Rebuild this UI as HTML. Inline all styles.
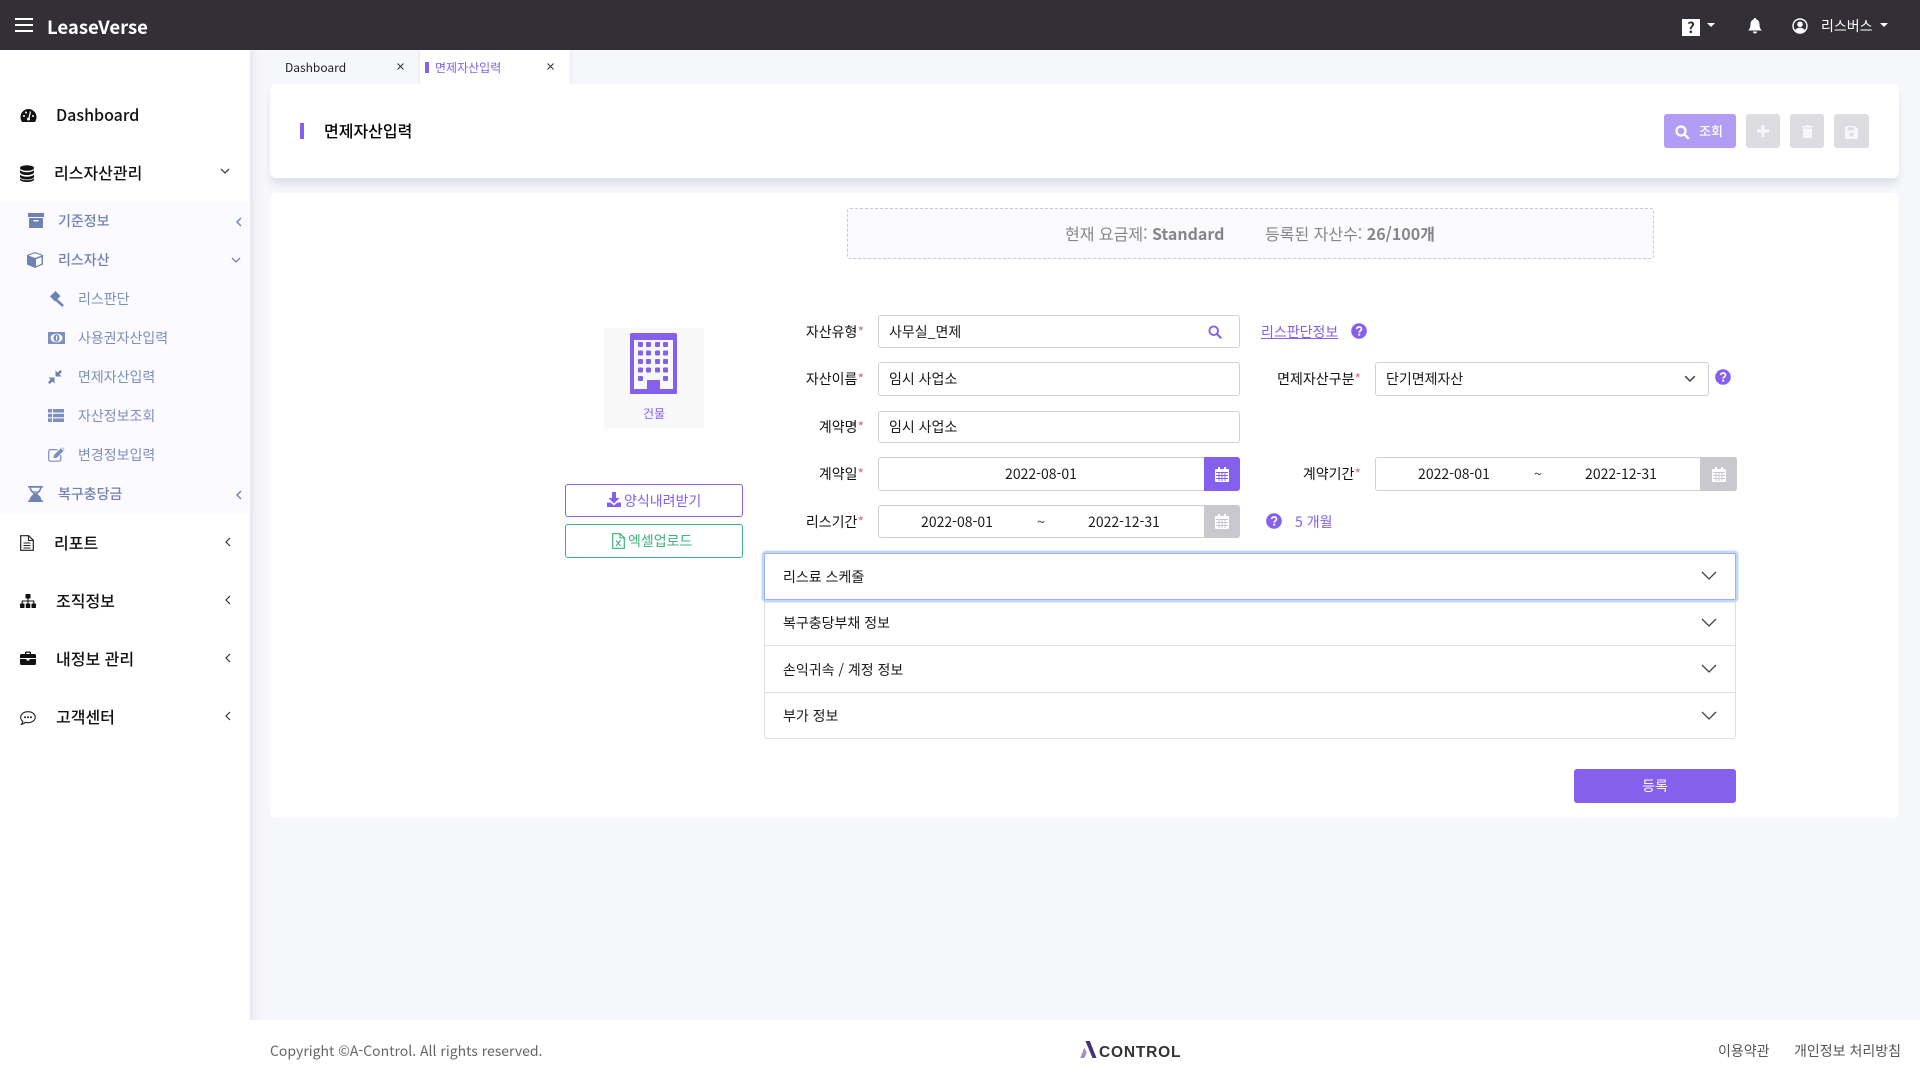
<!DOCTYPE html>
<html lang="ko">
<head>
<meta charset="utf-8">
<title>LeaseVerse</title>
<style>
*{box-sizing:border-box}
html,body{margin:0;padding:0}
body{width:1920px;height:1080px;position:relative;overflow:hidden;background:#f6f7fb;font-family:"Noto Sans CJK KR","Liberation Sans",sans-serif;font-size:14px;color:#1a1a1a}
.a{position:absolute}
.t{position:absolute;line-height:20px;white-space:nowrap}
svg{position:absolute;display:block}
.side{font-size:16px;color:#111;font-weight:500}
.sub{font-size:14px;color:#6f82b3;font-weight:500}
.sub2{font-size:14px;color:#7d8fbc}
.inp{position:absolute;background:#fff;border:1px solid #ced1dc;border-radius:3px}
.lab{position:absolute;line-height:20px;text-align:right;white-space:nowrap;color:#111}
.lab i{font-style:normal;color:#d0708a}
.sq{position:absolute;border-radius:0 3px 3px 0}
.acc{position:absolute;left:764px;width:972px;background:#fff}
.btn{position:absolute;border-radius:3px}
</style>
</head>
<body>
<!-- top bar -->
<div class="a" style="left:0;top:0;width:1920px;height:50px;background:#322f36"></div>
<div class="a" style="left:15px;top:18px;width:18px;height:2px;background:#fff"></div>
<div class="a" style="left:15px;top:24px;width:18px;height:2px;background:#fff"></div>
<div class="a" style="left:15px;top:30px;width:18px;height:2px;background:#fff"></div>
<div class="t" style="left:47px;top:17px;font-size:18.5px;font-weight:700;color:#fff">LeaseVerse</div>
<div class="a" style="left:1682px;top:19px;width:18px;height:17px;background:#fff;color:#322f36;font-size:15px;font-weight:700;text-align:center;line-height:17px">?</div>
<div class="a" style="left:1707px;top:23px;border:4px solid transparent;border-top:4px solid #fff"></div>
<svg style="left:1747px;top:18px" width="16" height="16" viewBox="0 0 16 16"><path d="M8 0a1.3 1.3 0 0 1 1.2 1.4C11.5 2 12.5 4 12.5 6.5c0 3 1 4.5 2.3 6H1.200c1.300-1.500 2.300-3 2.300-6C3.500 4 4.500 2 6.800 1.400A1.300 1.300 0 0 1 8 0zM6 13.500h4a2 2 0 0 1-4 0z" fill="#fff"/></svg>
<svg style="left:1792px;top:18px" width="16" height="16" viewBox="0 0 16 16"><circle cx="8" cy="8" r="7" fill="none" stroke="#fff" stroke-width="1.400"/><circle cx="8" cy="6.300" r="2.800" fill="#fff"/><path d="M3 12.500c1-2 3-2.700 5-2.700s4 .7 5 2.700a7 7 0 0 1-10 0z" fill="#fff"/></svg>
<div class="t" style="left:1821px;top:16px;color:#fff;font-size:14px">리스버스</div>
<div class="a" style="left:1880px;top:23px;border:4px solid transparent;border-top:4px solid #fff"></div>

<!-- sidebar -->
<div class="a" style="left:0;top:50px;width:250px;height:1030px;background:#fff;box-shadow:3px 0 8px rgba(60,60,110,.11)"></div>
<div class="a" style="left:0;top:201px;width:250px;height:312px;background:#fafaff"></div>

<svg style="left:20px;top:108px" width="17" height="15" viewBox="0 0 17 15"><path d="M8.500 1A8 8 0 0 0 .5 9c0 2 .6 3.500 1.500 5h13c.9-1.500 1.500-3 1.500-5a8 8 0 0 0-8-8z" fill="#111"/><circle cx="4" cy="8" r="1" fill="#fff"/><circle cx="6" cy="4.500" r="1" fill="#fff"/><circle cx="13" cy="8" r="1" fill="#fff"/><path d="M10.500 3.500L9 10" stroke="#fff" stroke-width="1.200"/><circle cx="8.500" cy="11" r="1.500" fill="#fff"/></svg>
<div class="t side" style="left:56px;top:104px">Dashboard</div>

<svg style="left:20px;top:165px" width="14" height="17" viewBox="0 0 14 17"><ellipse cx="7" cy="3" rx="7" ry="2.800" fill="#111"/><path d="M0 5v2.200c0 1.500 3 2.800 7 2.800s7-1.300 7-2.800V5c-1 1.500-4 2.200-7 2.200S1 6.500 0 5z" fill="#111"/><path d="M0 9.500v2.200c0 1.500 3 2.800 7 2.800s7-1.300 7-2.800V9.500c-1 1.500-4 2.200-7 2.200S1 11 0 9.500z" fill="#111"/><path d="M0 13.200v1.300c0 1.400 3 2.500 7 2.500s7-1.100 7-2.500v-1.300c-1 1.300-4 2-7 2s-6-.7-7-2z" fill="#111"/></svg>
<div class="t side" style="left:54px;top:162px">리스자산관리</div>
<svg style="left:220px;top:168px" width="10" height="7" viewBox="0 0 10 7"><path d="M1 1l4 4 4-4" fill="none" stroke="#444" stroke-width="1.300"/></svg>

<svg style="left:28px;top:213px" width="16" height="15" viewBox="0 0 16 15"><rect x="0" y="0" width="16" height="4" fill="#6f82b3"/><rect x="1" y="5" width="14" height="10" fill="#6f82b3"/><rect x="5.500" y="7" width="5" height="1.400" fill="#fafaff"/></svg>
<div class="t sub" style="left:58px;top:211px">기준정보</div>
<svg style="left:235px;top:217px" width="7" height="10" viewBox="0 0 7 10"><path d="M6 1L2 5l4 4" fill="none" stroke="#6f82b3" stroke-width="1.400"/></svg>

<svg style="left:27px;top:252px" width="16" height="16" viewBox="0 0 16 16"><path d="M8 0l8 3v9.500L8 16 0 12.500V3z" fill="#6f82b3"/><path d="M1.500 3.500L8 6l6.500-2.500L8 1.200z" fill="#fafaff"/><path d="M9 7.200v7l5.500-2.500V5z" fill="#fafaff"/></svg>
<div class="t sub" style="left:58px;top:250px">리스자산</div>
<svg style="left:231px;top:257px" width="10" height="7" viewBox="0 0 10 7"><path d="M1 1l4 4 4-4" fill="none" stroke="#6f82b3" stroke-width="1.300"/></svg>

<svg style="left:48px;top:291px" width="16" height="16" viewBox="0 0 16 16"><path d="M7.500 0l5 5-5.500 5.500-5-5z" fill="#6f82b3"/><path d="M8 8.500l6.300 5.800" stroke="#6f82b3" stroke-width="2.600" stroke-linecap="round"/></svg>
<div class="t sub2" style="left:78px;top:289px">리스판단</div>

<svg style="left:48px;top:332px" width="17" height="12" viewBox="0 0 17 12"><rect width="17" height="12" rx=".8" fill="#7d8fbc"/><ellipse cx="8.500" cy="6" rx="6" ry="4.400" fill="#fafaff"/><ellipse cx="8.500" cy="6" rx="3" ry="3.800" fill="#7d8fbc"/><rect x="8" y="3.800" width="1.200" height="4.400" fill="#fafaff"/></svg>
<div class="t sub2" style="left:78px;top:328px">사용권자산입력</div>

<svg style="left:48px;top:370px" width="14" height="14" viewBox="0 0 14 14"><path d="M6.500 7.500v6l-2-2L1.500 14 0 12.500 2.500 9.500l-2-2zM7.500 6.500V.5l2 2L12.500 0 14 1.500l-2.500 3 2 2z" fill="#6f82b3"/></svg>
<div class="t sub2" style="left:78px;top:367px">면제자산입력</div>

<svg style="left:48px;top:409px" width="16" height="13" viewBox="0 0 16 13"><path d="M0 0h4v3.500H0zM5 0h11v3.500H5zM0 4.700h4v3.500H0zM5 4.700h11v3.500H5zM0 9.400h4V13H0zM5 9.400h11V13H5z" fill="#7d8fbc"/></svg>
<div class="t sub2" style="left:78px;top:406px">자산정보조회</div>

<svg style="left:48px;top:447px" width="17" height="15" viewBox="0 0 17 15"><path d="M9.500 2.600H2.500A1.800 1.800 0 0 0 .7 4.400v8A1.800 1.800 0 0 0 2.500 14.200h8.500a1.800 1.800 0 0 0 1.800-1.800V8" fill="none" stroke="#7d8fbc" stroke-width="1.200"/><path d="M6 8L12.800 1.200l2.800 2.800L8.800 10.800l-3.300.5zM13.600.5l.5-.3 2.500 2.500-.4.600z" fill="#7d8fbc"/></svg>
<div class="t sub2" style="left:78px;top:445px">변경정보입력</div>

<svg style="left:28px;top:486px" width="15" height="16" viewBox="0 0 15 16"><path d="M0 0h15v1.500h-1.500c0 3-2.500 5-4 6.500 1.500 1.500 4 3.500 4 6.500H15V16H0v-1.500h1.500c0-3 2.500-5 4-6.500-1.500-1.500-4-3.500-4-6.500H0z" fill="#6f82b3"/><path d="M3 1.800h9c-.3 2.300-3 4.500-4.500 5.700C6 6.300 3.300 4.100 3 1.800z" fill="#fafaff"/><path d="M5 5h5c-.6.900-1.800 1.800-2.500 2.500C6.800 6.800 5.600 5.900 5 5z" fill="#9dacd0"/></svg>
<div class="t sub" style="left:58px;top:484px">복구충당금</div>
<svg style="left:235px;top:490px" width="7" height="10" viewBox="0 0 7 10"><path d="M6 1L2 5l4 4" fill="none" stroke="#6f82b3" stroke-width="1.400"/></svg>

<svg style="left:20px;top:535px" width="14" height="16" viewBox="0 0 14 16"><path d="M.7.700h8l4.600 4.600v10H.7z" fill="none" stroke="#222" stroke-width="1.200"/><path d="M8.500 1v4.500H13M3.500 8h7M3.500 10.500h7M3.500 13h7" fill="none" stroke="#222" stroke-width="1.100"/></svg>
<div class="t side" style="left:54px;top:532px">리포트</div>
<svg style="left:224px;top:537px" width="7" height="10" viewBox="0 0 7 10"><path d="M6 1L2 5l4 4" fill="none" stroke="#333" stroke-width="1.200"/></svg>

<svg style="left:20px;top:594px" width="16" height="14" viewBox="0 0 16 14"><rect x="5.500" y="0" width="5" height="4.500" rx=".5" fill="#111"/><rect x="0" y="9.500" width="4.500" height="4.500" rx=".5" fill="#111"/><rect x="5.800" y="9.500" width="4.500" height="4.500" rx=".5" fill="#111"/><rect x="11.500" y="9.500" width="4.500" height="4.500" rx=".5" fill="#111"/><path d="M8 4v5.500M2.200 9.500V7h11.600v2.500" fill="none" stroke="#111" stroke-width="1.100"/></svg>
<div class="t side" style="left:56px;top:590px">조직정보</div>
<svg style="left:224px;top:595px" width="7" height="10" viewBox="0 0 7 10"><path d="M6 1L2 5l4 4" fill="none" stroke="#333" stroke-width="1.200"/></svg>

<svg style="left:20px;top:651px" width="16" height="14" viewBox="0 0 16 14"><path d="M5 3V1.500A1 1 0 0 1 6 .5h4a1 1 0 0 1 1 1V3h3.500A1.500 1.500 0 0 1 16 4.500V7H0V4.500A1.500 1.500 0 0 1 1.500 3zm1.300 0h3.400V1.800H6.300z" fill="#111"/><path d="M0 8h6.500v1.500h3V8H16v4.500a1.500 1.500 0 0 1-1.500 1.500h-13A1.500 1.500 0 0 1 0 12.500z" fill="#111"/></svg>
<div class="t side" style="left:56px;top:648px">내정보 관리</div>
<svg style="left:224px;top:653px" width="7" height="10" viewBox="0 0 7 10"><path d="M6 1L2 5l4 4" fill="none" stroke="#333" stroke-width="1.200"/></svg>

<svg style="left:20px;top:711px" width="16" height="14" viewBox="0 0 16 14"><path d="M8 .7c4.100 0 7.300 2.500 7.300 5.500S12.100 11.700 8 11.700c-.9 0-1.800-.1-2.500-.4-1 1-2.400 1.800-4 2 .8-.8 1.200-1.800 1.400-2.900C1.500 9.400.7 7.900.7 6.200.7 3.200 3.900.7 8 .7z" fill="none" stroke="#222" stroke-width="1.100"/><circle cx="5" cy="6.200" r="1" fill="#222"/><circle cx="8" cy="6.200" r="1" fill="#222"/><circle cx="11" cy="6.200" r="1" fill="#222"/></svg>
<div class="t side" style="left:56px;top:706px">고객센터</div>
<svg style="left:224px;top:711px" width="7" height="10" viewBox="0 0 7 10"><path d="M6 1L2 5l4 4" fill="none" stroke="#333" stroke-width="1.200"/></svg>

<!-- tabs -->
<div class="t" style="left:285px;top:58px;font-size:12px;color:#222">Dashboard</div>
<svg style="left:397px;top:63px" width="7" height="7" viewBox="0 0 7 7"><path d="M.5.500l6 6M6.500.500l-6 6" stroke="#333" stroke-width="1"/></svg>
<div class="a" style="left:420px;top:50px;width:150px;height:34px;background:#fff;box-shadow:0 0 3px rgba(80,80,120,.15)"></div>
<div class="a" style="left:425px;top:62px;width:4px;height:11px;background:#8560ec"></div>
<div class="t" style="left:435px;top:58px;font-size:12px;color:#8560ec">면제자산입력</div>
<svg style="left:547px;top:63px" width="7" height="7" viewBox="0 0 7 7"><path d="M.5.500l6 6M6.500.500l-6 6" stroke="#333" stroke-width="1"/></svg>

<!-- header card -->
<div class="a" style="left:270px;top:84px;width:1629px;height:94px;background:#fff;border-radius:6px;box-shadow:0 7px 8px -1px rgba(60,60,100,.12)"></div>
<div class="a" style="left:300px;top:123px;width:4px;height:16px;background:#8560ec"></div>
<div class="t" style="left:324px;top:120px;font-size:16px;font-weight:500;color:#000">면제자산입력</div>
<div class="btn" style="left:1664px;top:114px;width:72px;height:34px;background:#b39cf3"></div>
<svg style="left:1675px;top:125px" width="15" height="15" viewBox="0 0 15 15"><circle cx="6" cy="6" r="4.500" fill="none" stroke="#fff" stroke-width="2.200"/><path d="M9.500 9.500l4.300 4.300" stroke="#fff" stroke-width="2.400"/></svg>
<div class="t" style="left:1699px;top:121px;font-size:13px;font-weight:500;color:#fff">조회</div>
<div class="btn" style="left:1746px;top:114px;width:34px;height:34px;background:#dddce1"></div>
<svg style="left:1757px;top:125px" width="12" height="12" viewBox="0 0 12 12"><path d="M4.500 0h3v4.500H12v3H7.500V12h-3V7.500H0v-3h4.500z" fill="#f7f7f8"/></svg>
<div class="btn" style="left:1790px;top:114px;width:34px;height:34px;background:#dddce1"></div>
<svg style="left:1802px;top:125px" width="11" height="13" viewBox="0 0 11 13"><path d="M3.500 1L4.200 0h2.600l.7 1H11v1.500H0V1zM1 3.500h9V12a1 1 0 0 1-1 1H2a1 1 0 0 1-1-1z" fill="#f7f7f8"/></svg>
<div class="btn" style="left:1834px;top:114px;width:35px;height:34px;background:#dddce1"></div>
<svg style="left:1845px;top:126px" width="13" height="13" viewBox="0 0 13 13"><path d="M1.500 0H10l3 3v8.500a1.500 1.500 0 0 1-1.500 1.500h-10A1.500 1.500 0 0 1 0 11.500v-10A1.500 1.500 0 0 1 1.500 0z" fill="#f7f7f8"/><rect x="2.500" y="1.300" width="6.500" height="3" fill="#dddce1"/><circle cx="6.500" cy="8.500" r="2" fill="#dddce1"/></svg>

<!-- main card -->
<div class="a" style="left:270px;top:193px;width:1629px;height:625px;background:#fff;border-radius:6px"></div>
<div class="a" style="left:847px;top:208px;width:807px;height:51px;background:#fbfbff;border:1px dashed #c9c9d2;border-radius:3px"></div>
<div class="t" style="left:1065px;top:223px;font-size:16px;color:#85858c">현재 요금제: <b style="font-weight:700">Standard</b></div>
<div class="t" style="left:1265px;top:223px;font-size:16px;color:#85858c">등록된 자산수: <b style="font-weight:700">26/100개</b></div>

<!-- tile -->
<div class="a" style="left:604px;top:328px;width:100px;height:100px;background:#f8f8f8"></div>
<svg style="left:630px;top:333px" width="47" height="61" viewBox="0 0 47 61">
<rect x="0" y="0" width="47" height="61" rx="2" fill="#8560ec"/>
<rect x="4" y="7" width="39" height="50" fill="#f8f8f8"/>
<g fill="#8560ec"><rect x="8" y="9" width="5" height="5" rx="1"/><rect x="16" y="9" width="5" height="5" rx="1"/><rect x="25" y="9" width="5" height="5" rx="1"/><rect x="33" y="9" width="5" height="5" rx="1"/><rect x="8" y="17.500" width="5" height="5" rx="1"/><rect x="16" y="17.500" width="5" height="5" rx="1"/><rect x="25" y="17.500" width="5" height="5" rx="1"/><rect x="33" y="17.500" width="5" height="5" rx="1"/><rect x="8" y="26" width="5" height="5" rx="1"/><rect x="16" y="26" width="5" height="5" rx="1"/><rect x="25" y="26" width="5" height="5" rx="1"/><rect x="33" y="26" width="5" height="5" rx="1"/><rect x="8" y="34.500" width="5" height="5" rx="1"/><rect x="16" y="34.500" width="5" height="5" rx="1"/><rect x="25" y="34.500" width="5" height="5" rx="1"/><rect x="33" y="34.500" width="5" height="5" rx="1"/><rect x="8" y="43" width="5" height="5" rx="1"/><rect x="33" y="43" width="5" height="5" rx="1"/><rect x="17" y="47" width="13" height="14"/><rect x="0" y="56" width="47" height="5" rx="1"/></g></svg>
<div class="t" style="left:604px;top:404px;width:100px;text-align:center;font-size:12px;color:#8560ec">건물</div>

<!-- side buttons -->
<div class="btn" style="left:565px;top:484px;width:178px;height:33px;border:1px solid #8560ec;background:#fff"></div>
<svg style="left:607px;top:492px" width="14" height="15" viewBox="0 0 14 15"><path d="M5 0h4v6h3.500L7 11.500 1.500 6H5z" fill="#8560ec"/><path d="M0 10.500h3.500L7 13.500l3.500-3H14V15H0z" fill="#8560ec"/></svg>
<div class="t" style="left:624px;top:491px;font-size:14px;color:#8560ec">양식내려받기</div>
<div class="btn" style="left:565px;top:524px;width:178px;height:34px;border:1px solid #3fb27f;background:#fff"></div>
<svg style="left:612px;top:533px" width="13" height="16" viewBox="0 0 13 16"><path d="M.7.700h7.500l4.100 4.100v10.500H.7z" fill="none" stroke="#3fb27f" stroke-width="1.200"/><path d="M8 1v4h4" fill="none" stroke="#3fb27f" stroke-width="1.100"/><path d="M4 7.500l4.500 5.500M8.500 7.500L4 13" stroke="#3fb27f" stroke-width="1.100"/></svg>
<div class="t" style="left:628px;top:531px;font-size:14px;color:#3fb27f">엑셀업로드</div>

<!-- row 1 -->
<div class="lab" style="left:760px;width:104px;top:322px">자산유형<i>*</i></div>
<div class="inp" style="left:878px;top:315px;width:362px;height:33px"></div>
<div class="t" style="left:889px;top:322px">사무실_면제</div>
<svg style="left:1208px;top:325px" width="14" height="14" viewBox="0 0 14 14"><circle cx="5.700" cy="5.700" r="4.300" fill="none" stroke="#8560ec" stroke-width="1.900"/><path d="M9 9l4.200 4.200" stroke="#8560ec" stroke-width="2.100"/></svg>
<div class="t" style="left:1261px;top:322px;color:#8560ec;text-decoration:underline">리스판단정보</div>
<svg style="left:1351px;top:323px" width="16" height="16" viewBox="0 0 16 16"><circle cx="8" cy="8" r="7.800" fill="#8560ec"/><path d="M5.600 6.200C5.700 4.800 6.800 4 8.100 4c1.400 0 2.400.8 2.400 2 0 1.900-2.300 1.800-2.300 3.600" fill="none" stroke="#fff" stroke-width="1.700"/><rect x="7.200" y="10.700" width="2" height="1.900" fill="#fff"/></svg>

<!-- row 2 -->
<div class="lab" style="left:760px;width:104px;top:369px">자산이름<i>*</i></div>
<div class="inp" style="left:878px;top:362px;width:362px;height:34px"></div>
<div class="t" style="left:889px;top:369px">임시 사업소</div>
<div class="lab" style="left:1240px;width:121px;top:369px">면제자산구분<i>*</i></div>
<div class="inp" style="left:1375px;top:362px;width:334px;height:34px"></div>
<div class="t" style="left:1386px;top:369px">단기면제자산</div>
<svg style="left:1684px;top:375px" width="12" height="8" viewBox="0 0 12 8"><path d="M1.200 1.200L6 6l4.800-4.800" fill="none" stroke="#444" stroke-width="1.500"/></svg>
<svg style="left:1715px;top:369px" width="16" height="16" viewBox="0 0 16 16"><circle cx="8" cy="8" r="7.800" fill="#8560ec"/><path d="M5.600 6.200C5.700 4.800 6.800 4 8.100 4c1.400 0 2.400.8 2.400 2 0 1.900-2.300 1.800-2.300 3.600" fill="none" stroke="#fff" stroke-width="1.700"/><rect x="7.200" y="10.700" width="2" height="1.900" fill="#fff"/></svg>

<!-- row 3 -->
<div class="lab" style="left:760px;width:104px;top:417px">계약명<i>*</i></div>
<div class="inp" style="left:878px;top:411px;width:362px;height:32px"></div>
<div class="t" style="left:889px;top:417px">임시 사업소</div>

<!-- row 4 -->
<div class="lab" style="left:760px;width:104px;top:464px">계약일<i>*</i></div>
<div class="inp" style="left:878px;top:457px;width:362px;height:34px"></div>
<div class="t" style="left:960px;width:162px;text-align:center;top:464px">2022-08-01</div>
<div class="sq" style="left:1204px;top:457px;width:36px;height:34px;background:#8560ec"></div>
<svg style="left:1215px;top:467px" width="14" height="15" viewBox="0 0 14 15"><path d="M0 3a1 1 0 0 1 1-1h12a1 1 0 0 1 1 1v11a1 1 0 0 1-1 1H1a1 1 0 0 1-1-1z" fill="#fff"/><rect x="3" y="0" width="2" height="3.500" fill="#fff"/><rect x="9" y="0" width="2" height="3.500" fill="#fff"/><path d="M1 5.500h12M1 8.500h12M1 11.500h12M4 5v9M7 5v9M10 5v9" stroke="#8560ec" stroke-width=".9"/></svg>
<div class="lab" style="left:1240px;width:121px;top:464px">계약기간<i>*</i></div>
<div class="inp" style="left:1375px;top:457px;width:362px;height:34px"></div>
<div class="t" style="left:1394px;width:120px;text-align:center;top:464px">2022-08-01</div>
<div class="t" style="left:1534px;top:464px;color:#444">~</div>
<div class="t" style="left:1561px;width:120px;text-align:center;top:464px">2022-12-31</div>
<div class="sq" style="left:1700px;top:457px;width:37px;height:34px;background:#c9c8cd"></div>
<svg style="left:1712px;top:467px" width="14" height="15" viewBox="0 0 14 15"><path d="M0 3a1 1 0 0 1 1-1h12a1 1 0 0 1 1 1v11a1 1 0 0 1-1 1H1a1 1 0 0 1-1-1z" fill="#fff"/><rect x="3" y="0" width="2" height="3.500" fill="#fff"/><rect x="9" y="0" width="2" height="3.500" fill="#fff"/><path d="M1 5.500h12M1 8.500h12M1 11.500h12M4 5v9M7 5v9M10 5v9" stroke="#c9c8cd" stroke-width=".9"/></svg>

<!-- row 5 -->
<div class="lab" style="left:760px;width:104px;top:512px">리스기간<i>*</i></div>
<div class="inp" style="left:878px;top:505px;width:362px;height:33px"></div>
<div class="t" style="left:897px;width:120px;text-align:center;top:512px">2022-08-01</div>
<div class="t" style="left:1037px;top:512px;color:#444">~</div>
<div class="t" style="left:1064px;width:120px;text-align:center;top:512px">2022-12-31</div>
<div class="sq" style="left:1204px;top:505px;width:36px;height:33px;background:#c9c8cd"></div>
<svg style="left:1215px;top:514px" width="14" height="15" viewBox="0 0 14 15"><path d="M0 3a1 1 0 0 1 1-1h12a1 1 0 0 1 1 1v11a1 1 0 0 1-1 1H1a1 1 0 0 1-1-1z" fill="#fff"/><rect x="3" y="0" width="2" height="3.500" fill="#fff"/><rect x="9" y="0" width="2" height="3.500" fill="#fff"/><path d="M1 5.500h12M1 8.500h12M1 11.500h12M4 5v9M7 5v9M10 5v9" stroke="#c9c8cd" stroke-width=".9"/></svg>
<svg style="left:1266px;top:513px" width="16" height="16" viewBox="0 0 16 16"><circle cx="8" cy="8" r="7.800" fill="#8560ec"/><path d="M5.600 6.200C5.700 4.800 6.800 4 8.100 4c1.400 0 2.400.8 2.400 2 0 1.900-2.300 1.800-2.300 3.600" fill="none" stroke="#fff" stroke-width="1.700"/><rect x="7.200" y="10.700" width="2" height="1.900" fill="#fff"/></svg>
<div class="t" style="left:1295px;top:512px;color:#8560ec">5 개월</div>

<!-- accordion -->
<div class="acc" style="top:600px;height:139px;border:1px solid #dfdfe3;border-top:0;border-radius:0 0 3px 3px"></div>
<div class="a" style="left:764px;top:645px;width:972px;height:1px;background:#dfdfe3"></div>
<div class="a" style="left:764px;top:692px;width:972px;height:1px;background:#dfdfe3"></div>
<div class="acc" style="top:553px;height:47px;border:1px solid #9ab6e0;border-radius:2px;box-shadow:0 0 0 2.500px #c3d8f8"></div>
<div class="t" style="left:783px;top:567px;font-size:14px">리스료 스케줄</div>
<div class="t" style="left:783px;top:613px;font-size:14px">복구충당부채 정보</div>
<div class="t" style="left:783px;top:660px;font-size:14px">손익귀속 / 계정 정보</div>
<div class="t" style="left:783px;top:706px;font-size:14px">부가 정보</div>
<svg style="left:1701px;top:571px" width="16" height="9" viewBox="0 0 16 9"><path d="M1 1l7 7 7-7" fill="none" stroke="#444" stroke-width="1.300"/></svg>
<svg style="left:1701px;top:618px" width="16" height="9" viewBox="0 0 16 9"><path d="M1 1l7 7 7-7" fill="none" stroke="#444" stroke-width="1.300"/></svg>
<svg style="left:1701px;top:664px" width="16" height="9" viewBox="0 0 16 9"><path d="M1 1l7 7 7-7" fill="none" stroke="#444" stroke-width="1.300"/></svg>
<svg style="left:1701px;top:711px" width="16" height="9" viewBox="0 0 16 9"><path d="M1 1l7 7 7-7" fill="none" stroke="#444" stroke-width="1.300"/></svg>

<div class="btn" style="left:1574px;top:769px;width:162px;height:34px;background:#8560ec;color:#fff;text-align:center;line-height:35px;font-size:14px">등록</div>

<!-- footer -->
<div class="a" style="left:250px;top:1020px;width:1670px;height:60px;background:#fff"></div>
<div class="t" style="left:270px;top:1041px;font-size:14px;color:#666">Copyright ©A-Control. All rights reserved.</div>
<svg style="left:1079px;top:1041px" width="20" height="18" viewBox="0 0 20 18"><path d="M6.500 0h4.300L17.500 17h-4z" fill="#4a2f78"/><path d="M5.500 6.500l2.200 5.200L5.300 17H1.200z" fill="#a88cc8"/></svg>
<div class="t" style="left:1099px;top:1043px;font-size:15.500px;font-weight:700;color:#333;letter-spacing:.8px;font-family:'Liberation Sans',sans-serif">CONTROL</div>
<div class="t" style="left:1718px;top:1041px;color:#555">이용약관</div>
<div class="t" style="left:1794px;top:1041px;color:#555">개인정보 처리방침</div>
</body>
</html>
